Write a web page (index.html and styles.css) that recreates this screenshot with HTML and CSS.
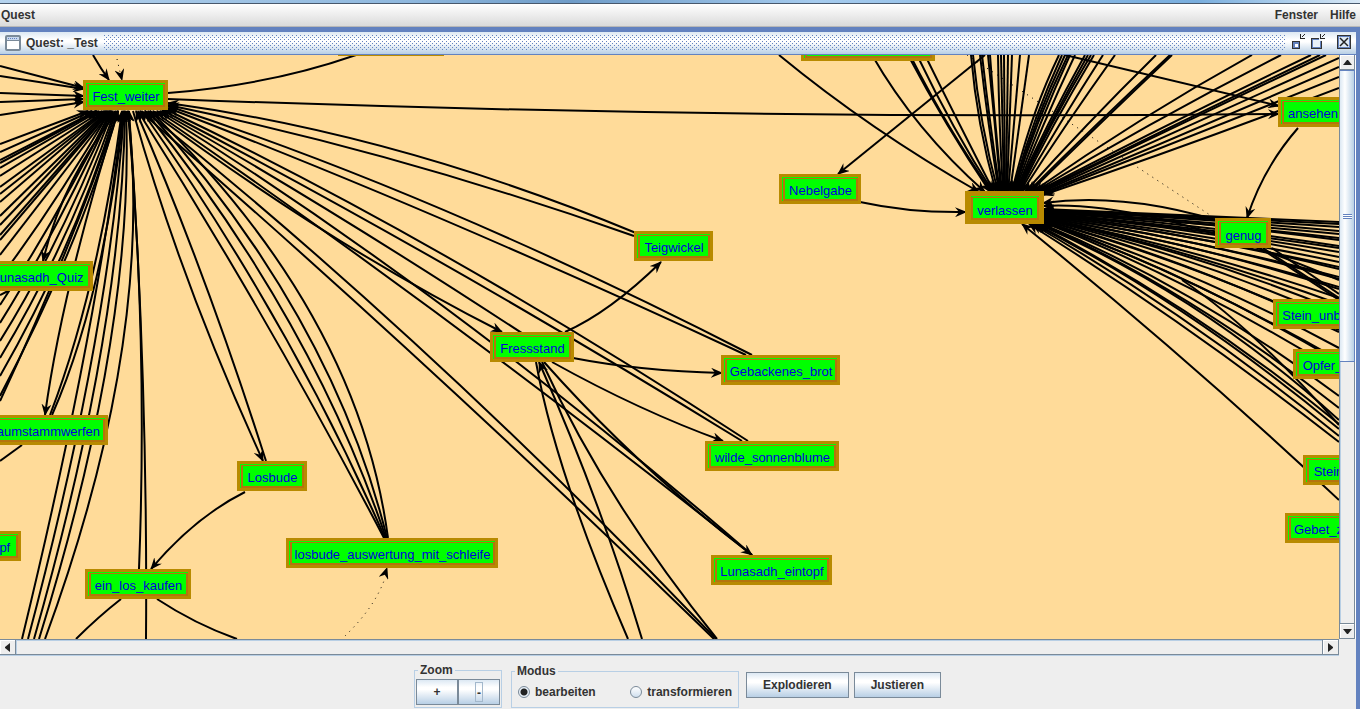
FILE: index.html
```
<!DOCTYPE html>
<html lang="de">
  <head>
    <meta charset="UTF-8" />
    <meta name="viewport" content="width=device-width, initial-scale=1.0" />
    <title>Quest: _Test</title>
    <link rel="stylesheet" href="styles.css">
  </head>
  <body>
    <div class="desktop-edge"></div>
    <nav class="menubar">
      <button class="menu">Quest</button>
      <button class="menu menu-right">Fenster</button>
      <button class="menu">Hilfe</button>
    </nav>

    <main class="frame">
      <header class="titlebar">
        <svg class="frame-icon" width="16" height="16" viewBox="0 0 16 16">
          <rect x="1" y="1" width="14" height="14" rx="1" fill="#fff" stroke="#7a8a99" stroke-width="2" />
          <path d="M2 2h12v3H2z" fill="#c8d8ee" />
          <path d="M3 3.5h10" stroke="#6382bf" stroke-dasharray="1 1" />
          <path d="M2 5.5h12" stroke="#7a8a99" />
        </svg>
        <h1>Quest: _Test</h1>
        <svg class="bumps" width="100%" height="16">
          <defs>
            <pattern id="bump" width="4" height="4" patternUnits="userSpaceOnUse">
              <path d="M0 0h1v1H0zM2 2h1v1H2z" fill="#6382bf" />
            </pattern>
          </defs>
          <rect width="100%" height="16" fill="url(#bump)" />
        </svg>
        <button class="win-btn" aria-label="Minimieren">
          <svg width="16" height="16" viewBox="0 0 16 16" shape-rendering="crispEdges">
            <path d="M1 7h8v8H1z" fill="#333" />
            <path d="M2 8h6v6H2z" fill="#6382bf" />
            <path d="M4 10h3v3H4z" fill="#fff" />
            <path d="M13 0h1v1h-1zM12 1h1v1h-1zM11 2h1v1h-1zM9 0h1v4h4v1H9z" fill="#222" />
          </svg>
        </button>
        <button class="win-btn" aria-label="Maximieren">
          <svg width="16" height="16" viewBox="0 0 16 16" shape-rendering="crispEdges">
            <path d="M0 4h11v11H0z" fill="#333" />
            <path d="M1 5h9v9H1z" fill="#6382bf" />
            <path d="M2 6h7v7H2z" fill="#e8f0f8" />
            <path d="M8 3h3v4H8z" fill="#eef4fa" />
            <path d="M13 0h1v1h-1zM12 1h1v1h-1zM11 2h1v1h-1zM9 0h1v4h4v1H9z" fill="#222" />
          </svg>
        </button>
        <button class="win-btn win-close" aria-label="Schließen">
          <svg width="14" height="14" viewBox="0 0 14 14">
            <rect x="0.5" y="0.5" width="13" height="13" fill="#dfeaf5" stroke="#333" />
            <rect x="1.5" y="1.5" width="11" height="11" fill="none" stroke="#6382bf" />
            <path d="M3 3L11 11M11 3L3 11" stroke="#222" stroke-width="1.5" />
          </svg>
        </button>
      </header>

      <section class="viewport">
        <div class="canvas">
          <svg class="edges" width="1360" height="600" viewBox="0 55 1360 600">
            <defs>
              <marker id="arrow" markerUnits="userSpaceOnUse" markerWidth="12" markerHeight="10" refX="11" refY="5" orient="auto">
                <path d="M0 0L12 5L0 10L4 5z" fill="#000" stroke="none" />
              </marker>
            </defs>

            <!-- into Fest_weiter, from the left -->
            <g marker-end="url(#arrow)">
              <path d="M0 66L84 88" />
              <path d="M0 76L84 89" />
              <path d="M0 93L84 96" />
              <path d="M0 102L84 99" />
              <path d="M0 115L84 102" />
              <path d="M93 55Q101 69 109 80" />
              <path d="M0 144L88 111" />
              <path d="M0 152L92 111" />
              <path d="M0 160L96 111" />
              <path d="M0 163L97 111" />
              <path d="M0 168L99 111" />
              <path d="M0 176L102 111" />
              <path d="M0 187L104 111" />
              <path d="M0 194L105 111" />
              <path d="M0 202L106 111" />
              <path d="M0 216L107 111" />
              <path d="M0 225L108 111" />
              <path d="M0 235L109 111" />
              <path d="M0 240L110 111" />
              <path d="M0 255L111 111" />
              <path d="M0 278Q55 205 110 111" />
              <path d="M0 305Q55 222 111 111" />
              <path d="M0 323Q55 235 112 111" />
              <path d="M0 341Q60 245 113 111" />
              <path d="M0 358Q68 245 115 111" />
              <path d="M0 376Q75 245 116 111" />
              <path d="M0 401Q75 240 118 111" />
              <path d="M0 396Q82 240 118 111" />
              <path d="M22 639Q97 330 123 111" />
              <path d="M28 639Q110 330 124 111" />
              <path d="M34 639Q122 330 125 111" />
              <path d="M39 639Q135 330 126 111" />
              <path d="M45 639Q155 340 128 111" />
              <path d="M50 415Q98 290 122 111" />
              <path d="M52 415Q103 300 124 111" />
              <path d="M139 569Q148 340 128 111" />
              <path d="M146 639Q148 380 129 111" />
            </g>

            <!-- into Fest_weiter, from the right -->
            <g marker-end="url(#arrow)">
              <path d="M266 461Q205 270 136 111" />
              <path d="M384 538Q270 320 138 111" />
              <path d="M385 538Q290 320 142 111" />
              <path d="M386 538Q312 318 145 111" />
              <path d="M387 538Q332 315 148 111" />
              <path d="M388 538Q358 312 150 111" />
              <path d="M714 639Q425 358 140 111" />
              <path d="M716 639Q430 340 145 111" />
              <path d="M752 555Q448 313 153 111" />
              <path d="M752 555Q450 293 157 111" />
              <path d="M540 345Q330 207 160 111" />
              <path d="M742 441Q445 258 162 110" />
              <path d="M748 441Q445 243 165 109" />
              <path d="M746 355Q430 208 168 108" />
              <path d="M752 355Q440 195 168 106" />
              <path d="M634 236Q400 153 168 105" />
              <path d="M636 233Q400 135 168 103" />
            </g>

            <!-- out of Fest_weiter -->
            <path d="M168 93Q270 85 356 55" />
            <g marker-end="url(#arrow)">
              <path d="M168 99Q720 120 1279 114" />
              <path d="M118 111Q62 180 43 261" />
              <path d="M118 111Q62 290 45 415" />
              <path d="M133 111Q180 280 263 461" />
              <path d="M150 111Q330 245 502 332" />
            </g>

            <!-- Losbude, Fressstand and their neighbours -->
            <path d="M8 291L0 295" />
            <path d="M22 445L0 461" />
            <path d="M121 599Q98 617 76 639" />
            <path d="M157 599Q195 624 237 639" />
            <path d="M536 362Q555 470 628 639" />
            <path d="M542 362Q605 500 717 639" />
            <g marker-end="url(#arrow)">
              <path d="M245 492Q195 517 151 569" />
              <path d="M565 332Q610 312 661 262" />
              <path d="M573 358Q640 371 722 373" />
              <path d="M552 362Q640 411 723 441" />
              <path d="M544 362Q640 470 752 555" />
              <path d="M642 639Q600 500 539 362" />
              <path d="M985 55L838 174" />
              <path d="M860 202Q910 213 966 212" />
              <path d="M1065 55L1279 106" />
              <path d="M1298 128Q1263 168 1247 218" />
            </g>

            <!-- into verlassen, from above -->
            <g marker-end="url(#arrow)">
              <path d="M779 55Q870 130 979 192" />
              <path d="M872 55Q915 130 985 192" />
              <path d="M908 55Q945 125 990 192" />
              <path d="M910 55Q948 130 992 192" />
              <path d="M917 55Q953 130 993 192" />
              <path d="M925 55Q957 120 994 192" />
              <path d="M971 55Q977 125 996 192" />
              <path d="M973 55Q980 125 998 192" />
              <path d="M980 55Q988 125 999 192" />
              <path d="M982 55Q990 125 1000 192" />
              <path d="M988 55Q995 125 1001 192" />
              <path d="M990 55Q995 125 1002 192" />
              <path d="M998 55Q999 125 1003 192" />
              <path d="M1001 55L1004 192" />
              <path d="M1004 55L1005 192" />
              <path d="M1008 55L1006 192" />
              <path d="M1012 55L1007 192" />
              <path d="M1020 55L1008 192" />
              <path d="M1029 55L1010 192" />
              <path d="M1059 55Q1030 115 1012 192" />
              <path d="M1062 55Q1030 125 1013 192" />
              <path d="M1065 55Q1032 125 1014 192" />
              <path d="M1068 55Q1034 125 1014 192" />
              <path d="M1070 55Q1038 125 1015 192" />
              <path d="M1075 55Q1042 125 1016 192" />
              <path d="M1085 55Q1046 125 1016 192" />
              <path d="M1088 55Q1048 125 1017 192" />
              <path d="M1091 55Q1049 125 1018 192" />
              <path d="M1094 55Q1052 125 1019 192" />
              <path d="M1103 55Q1058 125 1020 192" />
              <path d="M1115 55Q1065 125 1022 192" />
              <path d="M1156 55Q1085 125 1025 192" />
              <path d="M1170 55Q1095 125 1028 192" />
              <path d="M1172 55Q1096 127 1030 192" />
              <path d="M1252 55Q1140 117 1032 192" />
              <path d="M1281 55Q1150 122 1034 192" />
              <path d="M1311 55Q1165 125 1036 192" />
              <path d="M1320 55Q1168 128 1038 192" />
              <path d="M1326 55Q1172 128 1040 192" />
              <path d="M1339 58Q1185 127 1042 192" />
              <path d="M1339 67Q1190 132 1043 193" />
              <path d="M1339 77Q1190 137 1043 194" />
              <path d="M1339 88Q1190 145 1043 195" />
            </g>

            <!-- into verlassen, from the right -->
            <g marker-end="url(#arrow)">
              <path d="M1235 226Q1130 191 1043 203" />
              <path d="M1339 280Q1150 200 1043 206" />
              <path d="M1339 222Q1190 215 1043 209" />
              <path d="M1339 224Q1190 216 1043 210" />
              <path d="M1339 227Q1190 217 1043 210" />
              <path d="M1339 231Q1190 217 1043 211" />
              <path d="M1339 234Q1190 220 1043 211" />
              <path d="M1339 238Q1190 221 1043 212" />
              <path d="M1339 240Q1190 220 1043 212" />
              <path d="M1339 246Q1190 223 1043 212" />
              <path d="M1339 248Q1190 226 1043 213" />
              <path d="M1339 252Q1190 227 1043 213" />
              <path d="M1339 257Q1190 227 1043 214" />
              <path d="M1339 262Q1190 231 1043 214" />
              <path d="M1339 267Q1190 234 1043 215" />
              <path d="M1339 269Q1190 233 1043 215" />
              <path d="M1339 277Q1190 238 1043 216" />
              <path d="M1339 279Q1190 237 1043 216" />
              <path d="M1339 287Q1190 243 1043 217" />
              <path d="M1339 289Q1190 242 1043 217" />
              <path d="M1339 298Q1190 247 1043 218" />
              <path d="M1339 304Q1190 250 1043 218" />
              <path d="M1339 311Q1190 250 1043 219" />
              <path d="M1339 319Q1190 255 1043 219" />
              <path d="M1339 330Q1190 262 1043 220" />
              <path d="M1339 332Q1190 260 1043 220" />
              <path d="M1339 348Q1190 268 1043 221" />
              <path d="M1339 360Q1190 275 1043 221" />
              <path d="M1339 362Q1190 273 1043 222" />
              <path d="M1339 372Q1190 280 1043 222" />
              <path d="M1339 396Q1190 285 1040 223" />
              <path d="M1339 408Q1190 290 1039 223" />
              <path d="M1339 420Q1200 294 1038 224" />
              <path d="M1339 424Q1200 310 1036 224" />
              <path d="M1339 429Q1190 305 1034 224" />
              <path d="M1339 436Q1190 315 1032 224" />
              <path d="M1339 442Q1190 325 1029 224" />
              <path d="M1339 500Q1190 360 1022 224" />
            </g>
            <path d="M1263 248L1339 298" />
            <path d="M1257 246L1339 300" />
            <path d="M1272 248L1339 294" />
            <path d="M1182 280Q1250 325 1339 425" />

            <!-- optional transitions -->
            <g class="dotted">
              <path d="M967 55L1213 217" />
              <path d="M117 59L120 72" />
              <path d="M345 636Q375 607 385 578" />
            </g>
            <g class="arrow-only" marker-end="url(#arrow)">
              <path d="M120 72L122 80" />
              <path d="M384 577L387 568" />
            </g>
          </svg>

          <div class="node n-hidden"><span></span></div>
          <div class="node n-top"><span></span></div>
          <div class="node n-fest"><span>Fest_weiter</span></div>
          <div class="node n-quiz"><span>Lunasadh_Quiz</span></div>
          <div class="node n-baum"><span>Baumstammwerfen</span></div>
          <div class="node n-topf"><span>Eintopf</span></div>
          <div class="node n-kaufen"><span>ein_los_kaufen</span></div>
          <div class="node n-losbude"><span>Losbude</span></div>
          <div class="node n-auswertung"><span>losbude_auswertung_mit_schleife</span></div>
          <div class="node n-fress"><span>Fressstand</span></div>
          <div class="node n-teig"><span>Teigwickel</span></div>
          <div class="node n-brot"><span>Gebackenes_brot</span></div>
          <div class="node n-blume"><span>wilde_sonnenblume</span></div>
          <div class="node n-eintopf"><span>Lunasadh_eintopf</span></div>
          <div class="node n-nebel"><span>Nebelgabe</span></div>
          <div class="node n-verlassen"><span>verlassen</span></div>
          <div class="node n-ansehen"><span>ansehen</span></div>
          <div class="node n-genug"><span>genug</span></div>
          <div class="node n-unb"><span>Stein_unb</span></div>
          <div class="node n-opfer"><span>Opfer_</span></div>
          <div class="node n-stein"><span>Stein</span></div>
          <div class="node n-gebet"><span>Gebet_z</span></div>
        </div>

        <div class="scroll scroll-v">
          <button class="scroll-btn" aria-label="Nach oben">
            <svg width="9" height="5" viewBox="0 0 9 5"><path d="M0 5L4 0h1L9 5z" /></svg>
          </button>
          <div class="thumb"><i></i></div>
          <div class="track"></div>
          <button class="scroll-btn" aria-label="Nach unten">
            <svg width="9" height="5" viewBox="0 0 9 5"><path d="M0 0h9L5 5H4z" /></svg>
          </button>
        </div>

        <div class="scroll scroll-h">
          <button class="scroll-btn" aria-label="Nach links">
            <svg width="5" height="9" viewBox="0 0 5 9"><path d="M5 0v9L0 5V4z" /></svg>
          </button>
          <div class="track"></div>
          <button class="scroll-btn" aria-label="Nach rechts">
            <svg width="5" height="9" viewBox="0 0 5 9"><path d="M0 0v9L5 5V4z" /></svg>
          </button>
        </div>
      </section>

      <footer class="toolbar">
        <fieldset class="zoom">
          <legend>Zoom</legend>
          <button class="btn">+</button>
          <button class="btn"><span class="focus">-</span></button>
        </fieldset>
        <fieldset class="modus">
          <legend>Modus</legend>
          <label><input type="radio" name="modus" checked />bearbeiten</label>
          <label><input type="radio" name="modus" />transformieren</label>
        </fieldset>
        <button class="btn action">Explodieren</button>
        <button class="btn action">Justieren</button>
      </footer>
    </main>
  </body>
</html>
```
FILE: styles.css
```
* {
  box-sizing: border-box;
}
body {
  margin: 0;
  height: 100vh;
  display: flex;
  flex-direction: column;
  overflow: hidden;
  background-color: #eeeeee;
  color: #333333;
  font: bold 12px/16px "Liberation Sans", Arial, sans-serif;
}
button {
  margin: 0;
  padding: 0;
  border: none;
  background: none;
  color: inherit;
  font: inherit;
}

/* Menu bar */
.desktop-edge {
  height: 4px;
  border-bottom: 1px solid #48586c;
  background: linear-gradient(90deg, #b5d3ee, #8fb8de 30%, #6f9cc8 42%, #a5cbee 60%, #79aede 88%, #d8e8f6);
}
.menubar {
  display: flex;
  gap: 12px;
  height: 23px;
  padding: 0 4px 1px 1px;
  border-bottom: 1px solid #b8b8b8;
  background: linear-gradient(#ffffff, #dadada);
}
.menu-right {
  margin-left: auto;
}

/* Internal frame */
.frame {
  flex: 1;
  min-height: 0;
  display: flex;
  flex-direction: column;
  border-top: 5px solid #6382bf;
  border-right: 4px solid #6382bf;
}
.titlebar {
  display: flex;
  align-items: center;
  height: 23px;
  padding: 0 5px;
  border-bottom: 1px solid #6382bf;
  background: linear-gradient(#dce8f3, #ffffff 35%, #ffffff 45%, #b8cfe5);
}
.titlebar svg {
  display: block;
}
.titlebar h1 {
  margin: 0 6px 0 5px;
  font-size: 12px;
  white-space: nowrap;
}
.bumps {
  flex: 1;
  min-width: 0;
}
.win-btn {
  margin-left: 4px;
  padding-bottom: 2px;
}
.bumps + .win-btn {
  margin-left: 6px;
}
.win-close {
  margin-left: 10px;
}

/* Graph */
.viewport {
  flex: 1;
  min-height: 0;
  display: grid;
  grid-template: minmax(0, 1fr) 17px / minmax(0, 1fr) 17px;
}
.canvas {
  position: relative;
  overflow: hidden;
  background-color: #ffdb99;
}
.edges {
  position: absolute;
  left: 0;
  top: 0;
  fill: none;
  stroke: #000000;
  stroke-width: 2;
}
.dotted {
  stroke-width: 1;
  stroke-dasharray: 1 5;
}
.arrow-only {
  stroke: none;
}
.node {
  position: absolute;
  height: 30px;
  padding: 1px 0 0 1px;
  border: 3px solid #b88a00;
  background-color: #00ff00;
  color: #0000dd;
  font-weight: normal;
  font-size: 13px;
  line-height: 23px;
  white-space: nowrap;
}
.node span {
  display: flex;
  justify-content: center;
  height: 23px;
  border: 1px solid #b4740c;
  border-width: 1px 2px 2px 2px;
}
.n-hidden { left: 338px; top: -29px; width: 106px; }
.n-top { left: 801px; top: -24px; width: 134px; }
.n-fest { left: 83px; top: 25px; width: 85px; }
.n-quiz { left: -18px; top: 206px; width: 111px; }
.n-baum { left: -21px; top: 360px; width: 129px; }
.n-topf { left: -42px; top: 476px; width: 63px; }
.n-kaufen { left: 85px; top: 514px; width: 106px; }
.n-losbude { left: 237px; top: 406px; width: 70px; }
.n-auswertung { left: 286px; top: 483px; width: 212px; }
.n-fress { left: 490px; top: 277px; width: 84px; }
.n-teig { left: 634px; top: 176px; width: 79px; }
.n-brot { left: 721px; top: 300px; width: 119px; }
.n-blume { left: 705px; top: 386px; width: 134px; }
.n-eintopf { left: 711px; top: 500px; width: 121px; }
.n-nebel { left: 779px; top: 119px; width: 82px; }
.n-verlassen { left: 965px; top: 136px; width: 79px; height: 33px; padding: 1px 0 0; border-width: 5px 5px 4px 6px; }
.n-ansehen { left: 1278px; top: 42px; width: 69px; }
.n-genug { left: 1215px; top: 163px; width: 56px; }
.n-unb { left: 1273px; top: 244px; width: 76px; }
.n-opfer { left: 1293px; top: 294px; width: 58px; }
.n-stein { left: 1303px; top: 400px; width: 50px; }
.n-gebet { left: 1285px; top: 458px; width: 66px; }
.n-verlassen, .n-genug { line-height: 25px; }

/* Scroll bars */
.scroll {
  display: flex;
  background-color: #eeeeee;
}
.scroll-v {
  flex-direction: column;
  border-left: 1px solid #7a8a99;
  border-right: 1px solid #ffffff;
}
.scroll-h {
  border-top: 1px solid #7a8a99;
  border-bottom: 1px solid #b8cfe5;
}
.scroll-btn {
  display: flex;
  align-items: center;
  justify-content: center;
  flex: none;
  width: 15px;
  height: 15px;
  border: 1px solid #7a8a99;
  border-width: 0 1px 1px 0;
  box-shadow: inset 1px 1px #ffffff;
  fill: #222222;
}
.scroll-h .scroll-btn {
  width: 16px;
}
.track {
  flex: 1;
}
.scroll-v .track {
  border-right: 1px solid #7a8a99;
  border-bottom: 1px solid #7a8a99;
  box-shadow: inset 1px 0 #b8cfe5;
}
.scroll-h .track {
  border-bottom: 1px solid #7a8a99;
  border-right: 1px solid #7a8a99;
  box-shadow: inset 1px 1px #b8cfe5;
}
.thumb {
  display: flex;
  align-items: center;
  justify-content: center;
  height: 50%;
  width: 15px;
  border: 1px solid #6382bf;
  border-left-width: 0;
  background: linear-gradient(90deg, #dce8f3, #ffffff 35%, #b8cfe5);
}
.thumb i {
  width: 9px;
  height: 5px;
  background: repeating-linear-gradient(#6382bf 0 1px, #ffffff 1px 2px);
}

/* Tool bar */
.toolbar {
  display: flex;
  justify-content: center;
  align-items: flex-start;
  height: 53px;
  padding: 7px 0 0 4px;
}
.toolbar fieldset {
  display: flex;
  margin: 0;
  min-width: 0;
  border: 1px solid #b8cfe5;
}
.toolbar legend {
  padding: 0 2px;
  line-height: 14px;
}
.toolbar .zoom {
  width: 88px;
  height: 45px;
  margin-right: 9px;
  padding: 2px 1px;
}
.zoom legend {
  margin-left: 2px;
}
.toolbar .modus {
  width: 228px;
  height: 44px;
  justify-content: space-between;
  margin: 1px 7px 0 0;
  padding: 4px 6px;
}
.modus legend {
  margin-left: -3px;
}
.btn {
  height: 26px;
  border: 1px solid #7a8a99;
  background: linear-gradient(#dce8f3, #ffffff 30%, #ffffff 40%, #b8cfe5);
}
.zoom .btn {
  flex: 1;
}
.focus {
  display: inline-block;
  width: 6px;
  height: 18px;
  line-height: 20px;
  outline: 1px solid #a3b8cc;
}
.action {
  margin: 9px 5px 0 0;
  padding: 0 16px;
}
.modus label {
  display: flex;
  align-items: center;
  gap: 5px;
  height: 20px;
}
.modus input {
  appearance: none;
  width: 12px;
  height: 12px;
  margin: 0;
  border: 1px solid #7a8a99;
  border-radius: 50%;
  background: linear-gradient(#ffffff, #d0dfee);
}
.modus input:checked {
  background: radial-gradient(#222222 3px, #e8f0f8 4px);
}
```
